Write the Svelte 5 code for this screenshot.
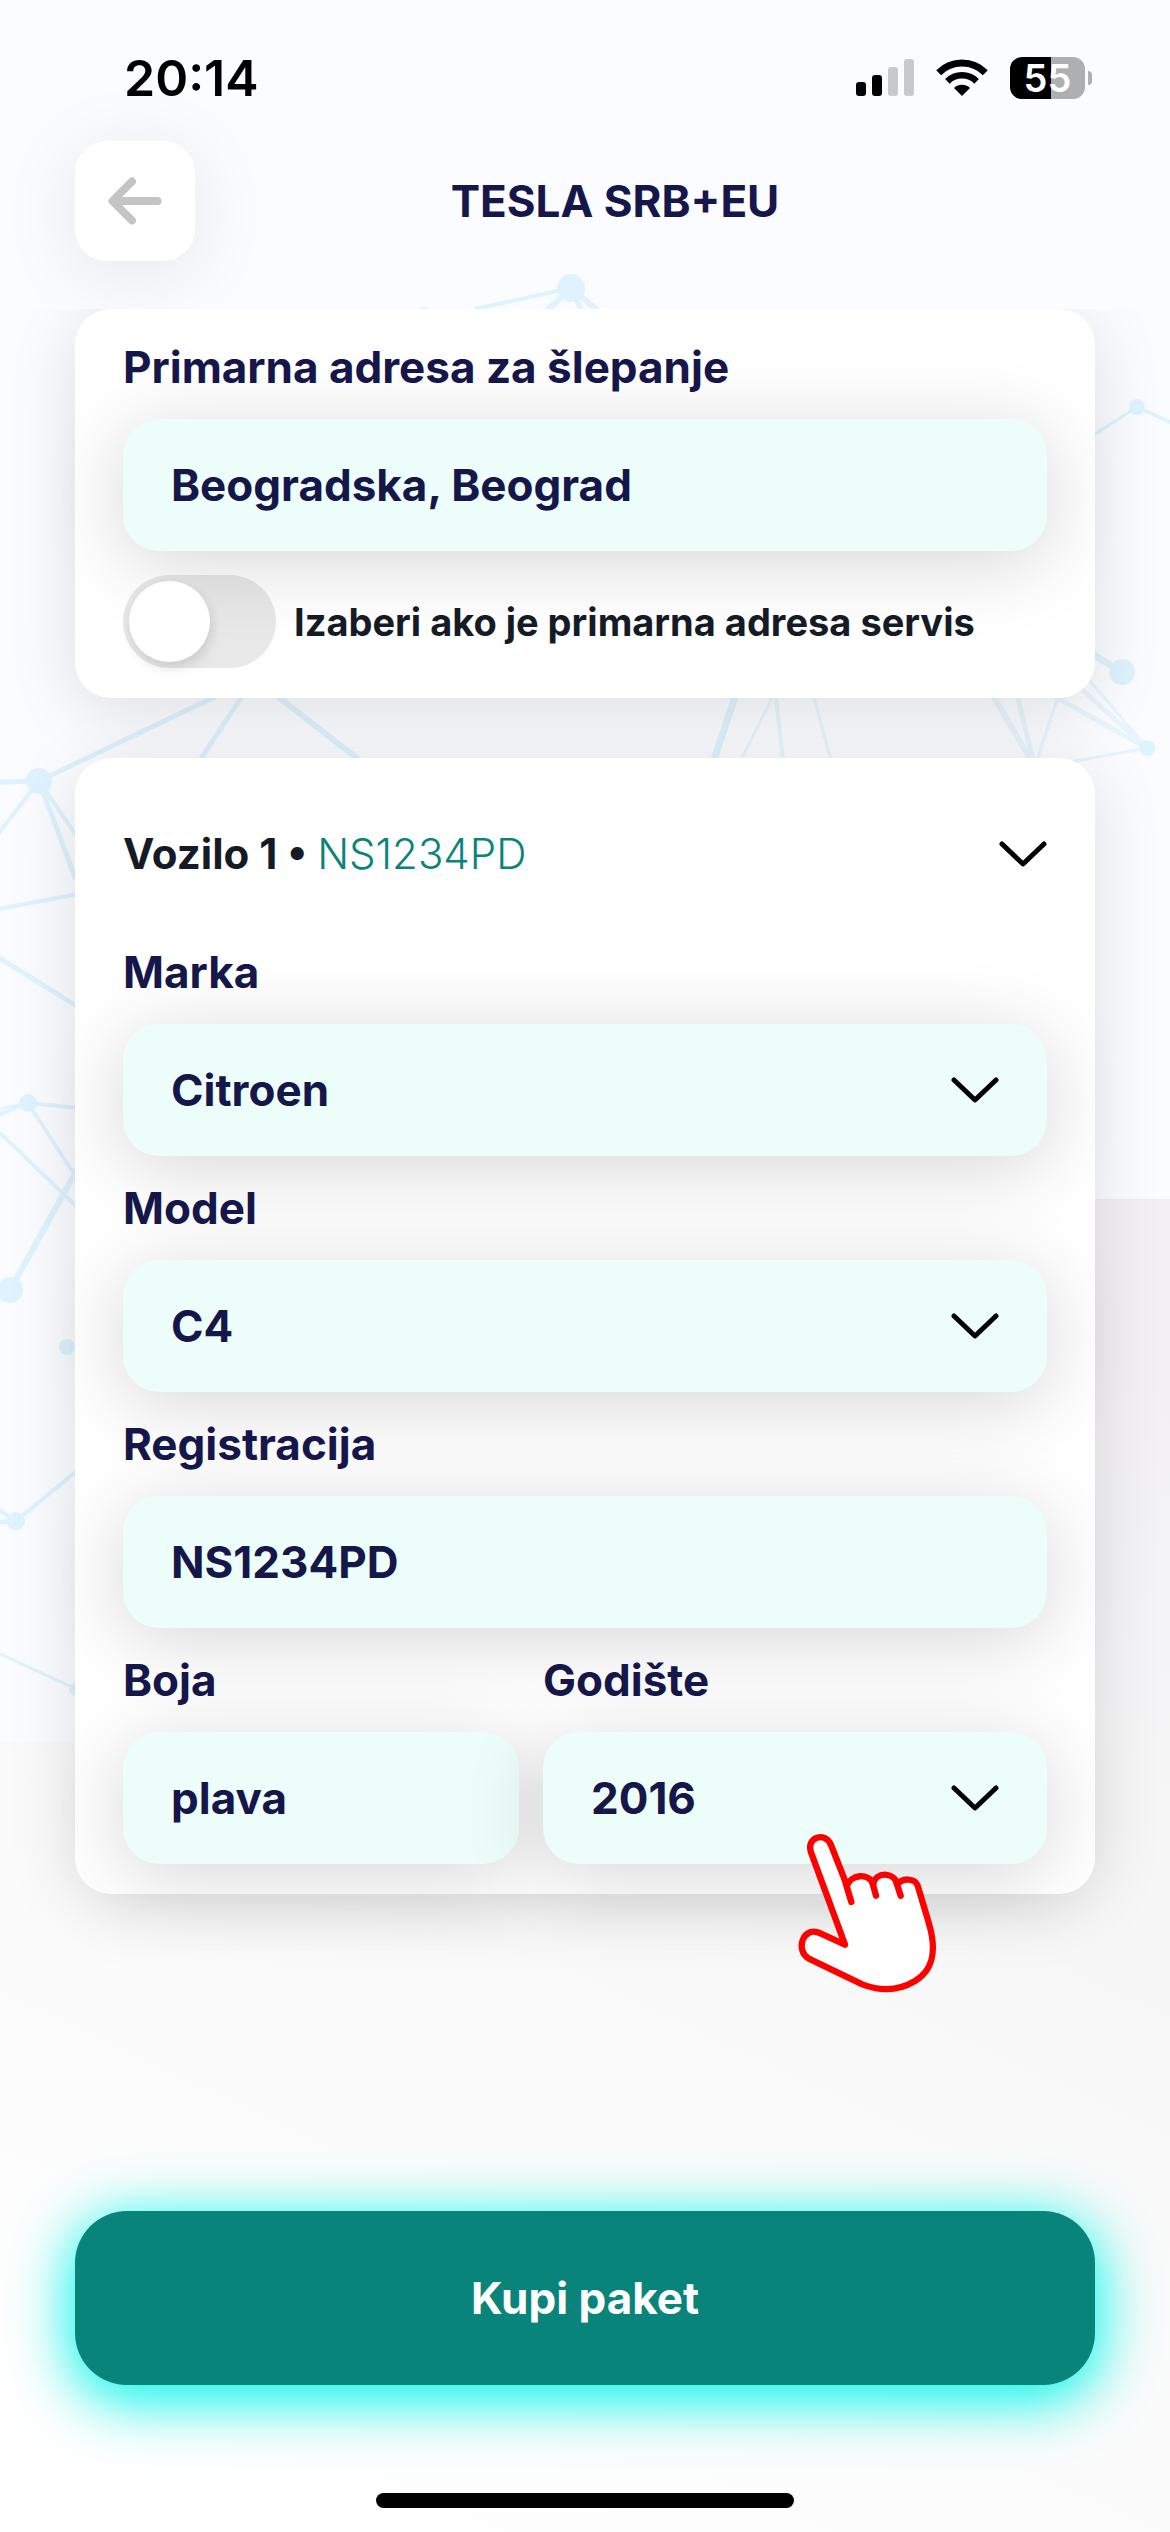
<script lang="ts">
  let address = $state('Beogradska, Beograd')
  let isServiceAddress = $state(false)
  let expanded = $state(true)
  let brand = $state('Citroen')
  let model = $state('C4')
  let registration = $state('NS1234PD')
  let color = $state('plava')
  let year = $state('2016')

  const brands = ['Citroen', 'Peugeot', 'Renault']
  const models = ['C3', 'C4', 'C5']
  const years = ['2015', '2016', '2017', '2018']

  // x1, y1, x2, y2, stroke width
  const lines = [
    [571, 288, 475, 309, 4],
    [571, 288, 545, 312, 6],
    [571, 288, 583, 314, 5],
    [571, 288, 602, 314, 6],
    [39, 781, 254, 678, 5],
    [254, 678, 200, 760, 5],
    [254, 678, 362, 762, 6],
    [39, 781, 0, 782, 5],
    [39, 781, -2, 834, 4],
    [39, 781, 76, 880, 5],
    [39, 781, 78, 838, 4],
    [-2, 909, 78, 894, 4],
    [-2, 957, 78, 1007, 5],
    [28, 1103, -2, 1115, 4],
    [28, 1103, -2, 1109, 2],
    [28, 1103, 78, 1108, 4],
    [28, 1103, 78, 1180, 4],
    [-2, 1131, 78, 1208, 4],
    [10, 1290, 78, 1168, 6],
    [16, 1521, 78, 1470, 4],
    [16, 1521, -2, 1509, 4],
    [16, 1521, -2, 1522, 5],
    [-2, 1653, 74, 1688, 3],
    [1137, 407, 1092, 436, 3],
    [1137, 407, 1172, 423, 4],
    [1122, 672, 1092, 654, 7],
    [736, 694, 714, 760, 7],
  ]

  const faintLines = [
    [774, 694, 741, 760, 3],
    [776, 698, 783, 760, 4],
    [813, 694, 831, 760, 3],
    [992, 694, 1031, 760, 6],
    [1017, 694, 1033, 760, 5],
    [1059, 694, 1037, 760, 3],
    [1147, 748, 1050, 694, 5],
    [1147, 748, 1078, 686, 5],
    [1147, 748, 1086, 676, 3],
    [1147, 748, 1070, 762, 3],
  ]

  const nodes = [
    [571, 288, 14],
    [424, 315, 8],
    [39, 781, 13],
    [28, 1103, 9],
    [10, 1290, 13],
    [67, 1347, 8],
    [16, 1521, 9],
    [76, 1689, 7],
    [1137, 407, 8],
    [1122, 672, 13],
    [1147, 748, 8],
  ]
</script>

{#snippet chevron()}
  <svg class="chevron" viewBox="0 0 48 26" aria-hidden="true">
    <path d="M3 3 24 23 45 3" />
  </svg>
{/snippet}

<div class="screen">
  <svg class="network" viewBox="0 0 1170 1742" aria-hidden="true">
    <path class="sky" d="M0 0H1170V1199H600V1742H0Z" />
    {#each lines as [x1, y1, x2, y2, width]}
      <line {x1} {y1} {x2} {y2} stroke-width={width} />
    {/each}
    {#each faintLines as [x1, y1, x2, y2, width]}
      <line class="faint" {x1} {y1} {x2} {y2} stroke-width={width} />
    {/each}
    {#each nodes as [cx, cy, r]}
      <circle {cx} {cy} {r} />
    {/each}
  </svg>

  <div class="status-bar">
    <span class="time">20:14</span>
    <div class="status-icons">
      <svg width="58" height="38" viewBox="0 0 58 38" aria-hidden="true">
        <rect x="0" y="23" width="10" height="14" rx="3" />
        <rect x="16" y="16" width="10" height="21" rx="3" />
        <rect class="off" x="32" y="8" width="10" height="29" rx="3" />
        <rect class="off" x="48" y="0" width="10" height="37" rx="3" />
      </svg>
      <svg class="wifi" width="52" height="38" viewBox="0 0 52 38" aria-hidden="true">
        <path d="M2.700 13.700A33 33 0 0 1 49.300 13.700" stroke-width="7" />
        <path d="M11.400 22.400A20.700 20.700 0 0 1 40.600 22.400" stroke-width="6.5" />
        <path class="dot" d="M26 37 18 29A11.500 11.500 0 0 1 34 29Z" />
      </svg>
      <div class="battery">
        <span class="battery-level">55</span>
        <span class="battery-cap"></span>
      </div>
    </div>
  </div>

  <header class="top-bar">
    <button class="back" type="button" aria-label="Nazad">
      <svg width="54" height="48" viewBox="0 0 54 48" aria-hidden="true">
        <path d="M24 4.500 4.500 24 24 43.500M5 24H49.500" />
      </svg>
    </button>
    <h1>TESLA SRB+EU</h1>
  </header>

  <main>
    <section class="card">
      <label class="caption" for="address">Primarna adresa za šlepanje</label>
      <input class="field" id="address" type="text" bind:value={address} />
      <label class="toggle">
        <input type="checkbox" bind:checked={isServiceAddress} />
        <span>Izaberi ako je primarna adresa servis</span>
      </label>
    </section>

    <section class="card">
      <button
        class="vehicle"
        type="button"
        aria-expanded={expanded}
        onclick={() => (expanded = !expanded)}
      >
        <span>Vozilo 1 • <em>{registration}</em></span>
        {@render chevron()}
      </button>

      {#if expanded}
        <label class="caption" for="brand">Marka</label>
        <div class="select">
          <select class="field" id="brand" bind:value={brand}>
            {#each brands as item}
              <option>{item}</option>
            {/each}
          </select>
          {@render chevron()}
        </div>

        <label class="caption" for="model">Model</label>
        <div class="select">
          <select class="field" id="model" bind:value={model}>
            {#each models as item}
              <option>{item}</option>
            {/each}
          </select>
          {@render chevron()}
        </div>

        <label class="caption" for="registration">Registracija</label>
        <input class="field" id="registration" type="text" bind:value={registration} />

        <div class="pair">
          <div class="column">
            <label class="caption" for="color">Boja</label>
            <input class="field" id="color" type="text" bind:value={color} />
          </div>
          <div class="column">
            <label class="caption" for="year">Godište</label>
            <div class="select">
              <select class="field" id="year" bind:value={year}>
                {#each years as item}
                  <option>{item}</option>
                {/each}
              </select>
              {@render chevron()}
              <svg class="pointer" viewBox="170 398 420 480" aria-hidden="true">
                <path
                  d="M314 733 212 456C196 410 256 392 272 434L320 556C332 522 384 516 399 552C404 512 464 514 471 553C484 532 524 532 532 556L566 670C592 760 574 812 524 842C474 872 418 872 366 852L204 774C164 750 188 672 242 700Z"
                />
                <path d="M316 548 333 605M396 546 407 586M468 546 481 586" />
              </svg>
            </div>
          </div>
        </div>
      {/if}
    </section>
  </main>

  <footer>
    <button class="buy" type="button">Kupi paket</button>
    <div class="home-indicator"></div>
  </footer>
</div>

<style>
  :global(body) {
    margin: 0;
  }

  .screen {
    --ink: #15164a;
    --text: #151b26;
    --teal: #09847a;
    position: relative;
    isolation: isolate;
    display: flex;
    flex-direction: column;
    box-sizing: border-box;
    min-height: 100vh;
    overflow: hidden;
    background: linear-gradient(205deg, #f2f0f3 45%, #f6f6f7 60%, #fafafa 75%, #fefefe 95%);
    color: var(--ink);
    font-family: Inter, 'Open Sans', sans-serif;
    font-size: 44px;
    font-weight: 700;
    line-height: 56px;
  }

  .network {
    position: absolute;
    top: 0;
    left: 0;
    z-index: -1;
    width: 100%;
    fill: #def3fe;
    stroke: #def3fe;
  }

  .network circle {
    stroke: none;
  }

  .network .sky {
    fill: #fbfcff;
    stroke: none;
  }

  .network .faint {
    stroke: #e8f5fd;
  }

  .status-bar {
    display: flex;
    align-items: center;
    justify-content: space-between;
    height: 60px;
    padding: 48px 78px 33px 124px;
    color: #000;
  }

  .time {
    font-size: 50px;
    font-weight: 600;
  }

  .status-icons {
    display: flex;
    align-items: center;
    gap: 22px;
  }

  .status-icons .off {
    fill: #c8c9cd;
  }

  .wifi path {
    fill: none;
    stroke: #000;
  }

  .wifi .dot {
    fill: #000;
    stroke: none;
  }

  .battery {
    display: flex;
    align-items: center;
    gap: 3px;
  }

  .battery-level {
    width: 75px;
    border-radius: 12px;
    background: linear-gradient(90deg, #000 55%, #aeafb1 55%);
    color: #fff;
    font-size: 38px;
    font-weight: 600;
    line-height: 42px;
    text-align: center;
  }

  .battery-cap {
    width: 4px;
    height: 14px;
    border-radius: 0 8px 8px 0;
    background: #aeafb1;
  }

  .top-bar {
    display: flex;
    align-items: center;
    padding: 0 135px 48px 75px;
  }

  h1 {
    flex: 1;
    margin: 0;
    font-size: 44px;
    text-align: center;
  }

  button,
  input,
  select {
    border: 0;
    color: inherit;
    font: inherit;
    cursor: pointer;
  }

  .back {
    display: grid;
    place-items: center;
    width: 120px;
    height: 120px;
    padding: 0;
    border-radius: 32px;
    background: #fff;
    box-shadow: 0 12px 80px rgba(0, 0, 0, 0.09);
  }

  .back path {
    fill: none;
    stroke: #c4c4c4;
    stroke-width: 8;
    stroke-linecap: round;
    stroke-linejoin: round;
  }

  main {
    display: flex;
    flex: 1;
    flex-direction: column;
    gap: 60px;
    padding: 0 75px 60px;
    overflow: hidden;
  }

  .card {
    display: flex;
    flex-direction: column;
    gap: 24px;
    padding: 30px 48px;
    border-radius: 36px;
    background: #fff;
    box-shadow: 0 12px 70px rgba(0, 0, 0, 0.12);
  }

  .field {
    display: block;
    box-sizing: border-box;
    width: 100%;
    height: 132px;
    padding: 0 48px;
    border-radius: 36px;
    outline: 0;
    background: #edfdfa;
    box-shadow: 0 12px 80px rgba(0, 0, 0, 0.16);
    appearance: none;
  }

  .caption {
    position: relative;
    z-index: 1;
  }

  .select {
    position: relative;
  }

  .chevron {
    flex-shrink: 0;
    width: 48px;
    height: 26px;
    fill: none;
    stroke: #000;
    stroke-width: 5;
    stroke-linecap: round;
    stroke-linejoin: round;
  }

  .select .chevron {
    position: absolute;
    top: 53px;
    right: 48px;
    pointer-events: none;
  }

  .toggle {
    display: flex;
    align-items: center;
    gap: 18px;
    color: var(--text);
    font-size: 38px;
    cursor: pointer;
  }

  .toggle input {
    display: flex;
    flex-shrink: 0;
    box-sizing: border-box;
    width: 153px;
    height: 93px;
    margin: 0;
    padding: 6px;
    border-radius: 48px;
    background: rgba(0, 0, 0, 0.09);
    appearance: none;
  }

  .toggle input::before {
    width: 81px;
    height: 81px;
    border-radius: 50%;
    background: #fff;
    box-shadow: 2px 6px 12px rgba(0, 0, 0, 0.12);
    content: '';
  }

  .toggle input:checked {
    justify-content: flex-end;
    background: var(--teal);
  }

  .vehicle {
    display: flex;
    align-items: center;
    justify-content: space-between;
    height: 132px;
    padding: 0;
    background: none;
    color: var(--text);
    font-size: 42px;
    text-align: left;
  }

  .vehicle em {
    color: var(--teal);
    font-style: normal;
    font-weight: 300;
  }

  .pair {
    display: grid;
    grid-template-columns: 11fr 14fr;
    gap: 24px;
  }

  .column {
    display: flex;
    flex-direction: column;
    gap: 24px;
    min-width: 0;
  }

  .pointer {
    position: absolute;
    top: 101px;
    right: 110px;
    width: 140px;
    height: 160px;
    fill: #fff;
    stroke: #f00;
    stroke-width: 19;
    stroke-linecap: round;
    stroke-linejoin: round;
    pointer-events: none;
  }

  footer {
    display: flex;
    flex-direction: column;
    align-items: center;
    gap: 108px;
    padding: 0 75px 24px;
  }

  .buy {
    width: 100%;
    height: 174px;
    border-radius: 52px;
    background: var(--teal);
    box-shadow: 0 12px 60px 4px #00f5ea;
    color: #fff;
  }

  .home-indicator {
    width: 41%;
    height: 15px;
    border-radius: 8px;
    background: #000;
  }
</style>
